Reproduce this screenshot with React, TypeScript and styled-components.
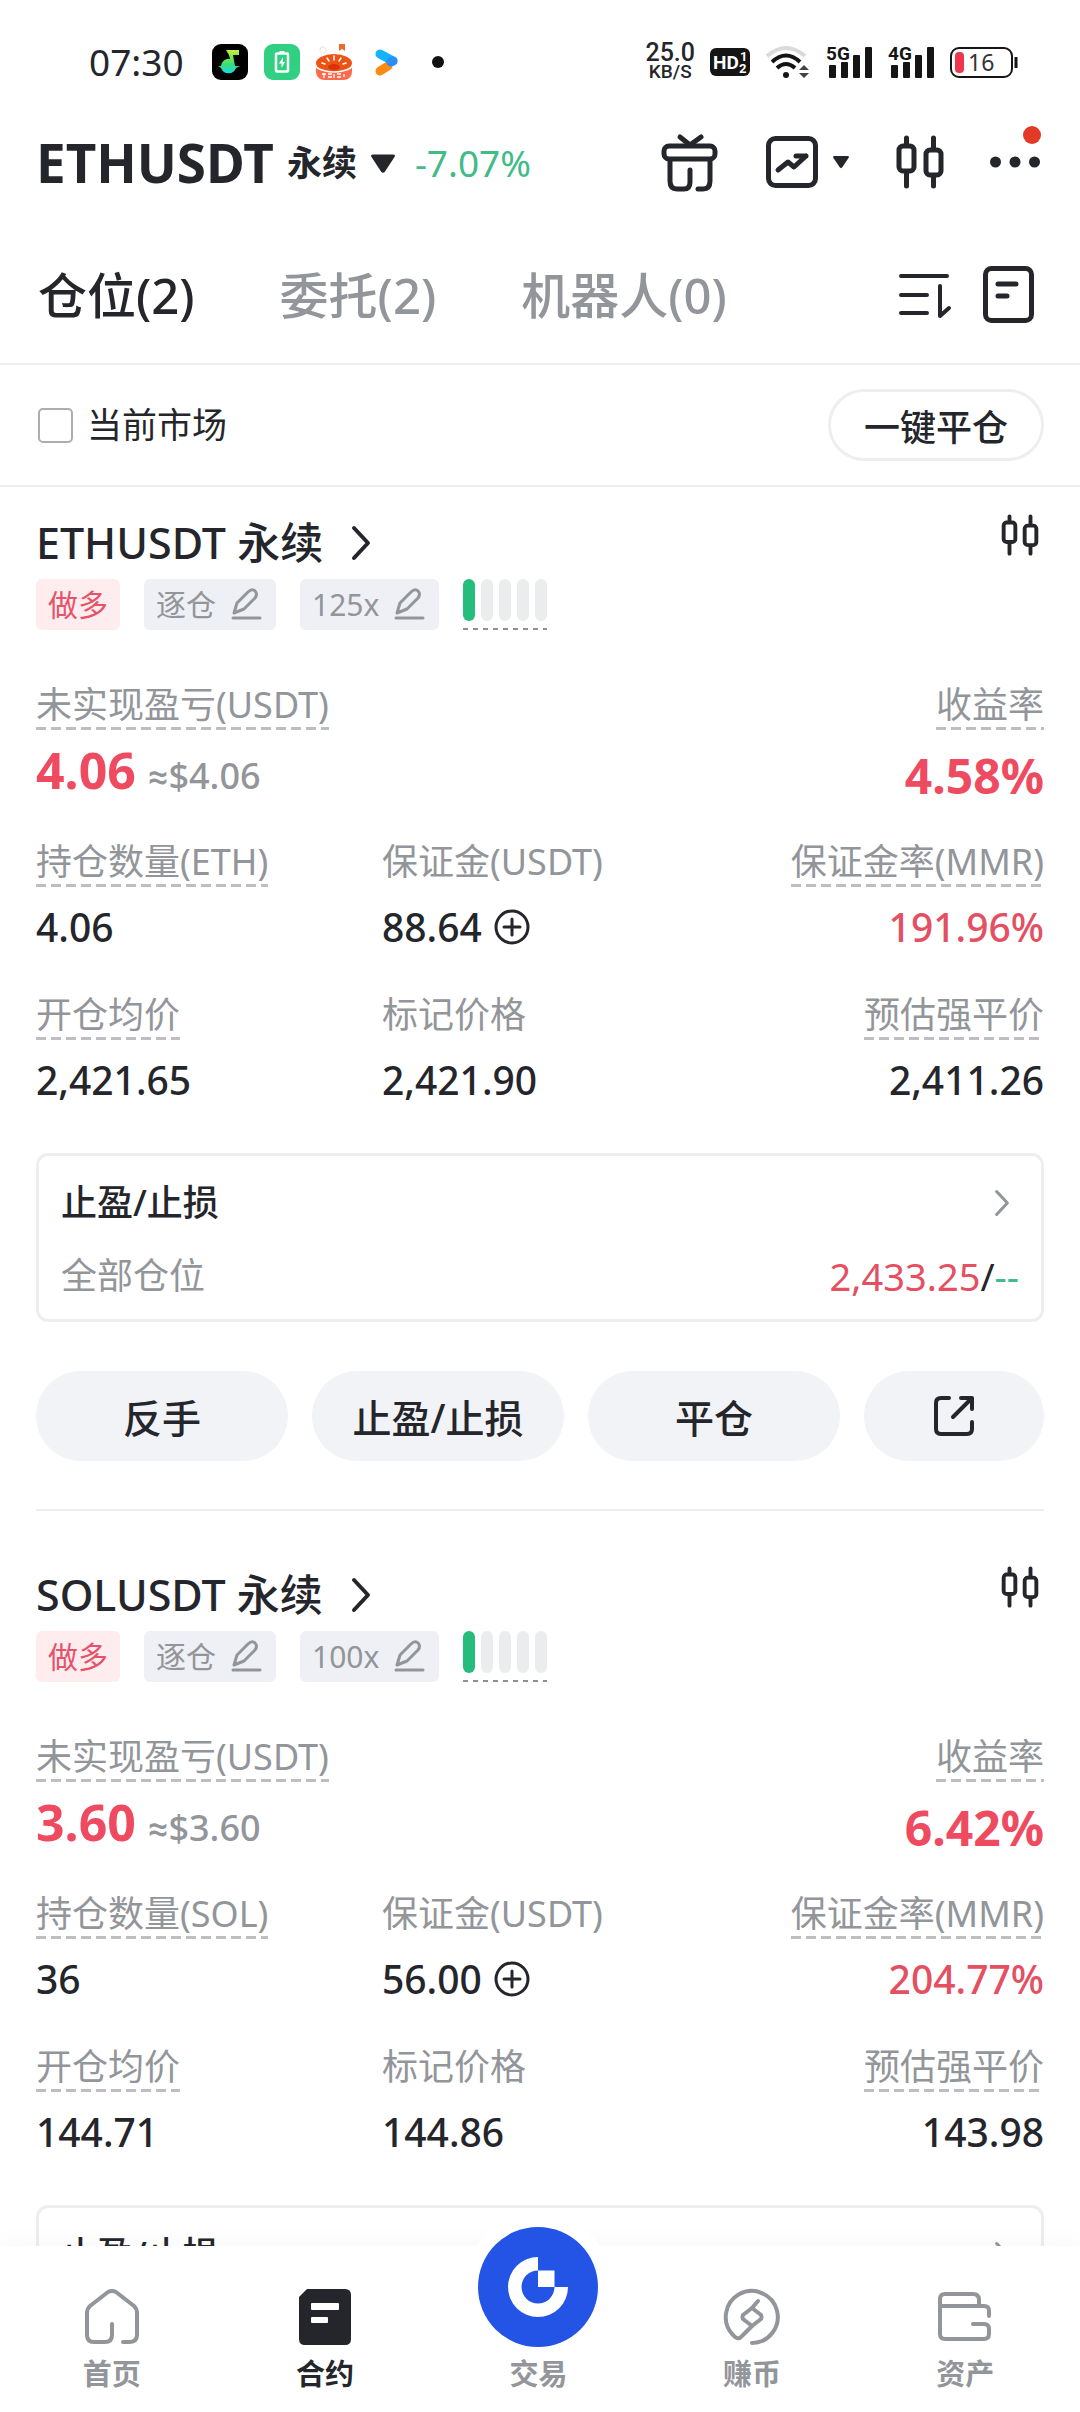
import React from "react";
import styled, { createGlobalStyle } from "styled-components";

const c = {
  ink: "#24262b",
  gray: "#929599",
  line: "#eeeeef",
  dash: "#bdbec2",
  red: "#ef4b60",
  softRed: "#e44f62",
  green: "#42bb88",
  blue: "#2354e6",
};

const GlobalStyle = createGlobalStyle`
  *, *::before, *::after { box-sizing: border-box; }
  body {
    margin: 0;
    background: #fff;
    color: ${c.ink};
    font-family: "Noto Sans", Roboto, "Noto Sans CJK SC", sans-serif;
    font-size: 36px;
  }
  button, input { font: inherit; color: inherit; margin: 0; }
  button { border: 0; padding: 0; background: none; cursor: pointer; }
  a { color: inherit; text-decoration: none; }
  svg { display: block; flex: none; overflow: visible; }
  h1, h2, dl, dt, dd { margin: 0; font: inherit; }
`;

const Screen = styled.div`
  height: 100vh;
  display: flex;
  flex-direction: column;
  background: #fff;
`;

/* ---------- status bar ---------- */

const StatusBar = styled.div`
  display: flex;
  justify-content: space-between;
  align-items: center;
  height: 98px;
  padding: 42px 62px 16px 89px;
`;

const StatusGroup = styled.div<{ $gap: number }>`
  display: flex;
  align-items: center;
  gap: ${(p) => p.$gap}px;
`;

const Clock = styled.span`
  font-size: 37px;
  line-height: 40px;
  margin-right: 12px;
`;

const Speed = styled.span`
  display: flex;
  flex-direction: column;
  align-items: center;
  font-family: Roboto, sans-serif;
  font-size: 25px;
  line-height: 20px;
  font-weight: 500;
`;

const SpeedUnit = styled.span`
  font-size: 19px;
  line-height: 18px;
`;

/* ---------- header ---------- */

const Header = styled.header`
  display: flex;
  justify-content: space-between;
  align-items: center;
  height: 128px;
  padding: 0 40px 0 36px;
`;

const PairButton = styled.button`
  display: flex;
  align-items: center;
  gap: 13px;
  padding-top: 2px;
  line-height: 72px;
`;

const PairName = styled.h1`
  font-size: 53px;
  font-weight: 700;
`;

const PairKind = styled.span`
  font-weight: 700;
  font-size: 35px;
`;

const PairChange = styled.span`
  margin-left: 6px;
  font-size: 37px;
  color: ${c.green};
`;

const HeaderTools = styled.div`
  display: flex;
  align-items: center;
  gap: 46px;
`;

const IconButton = styled.button`
  display: flex;
  align-items: center;
  gap: 14px;
  position: relative;
`;

const AlertDot = styled.i`
  position: absolute;
  right: -1px;
  top: -30px;
  width: 18px;
  height: 18px;
  border-radius: 50%;
  background: #e23a26;
`;

/* ---------- tabs and filter ---------- */

const TabBar = styled.div`
  display: flex;
  justify-content: space-between;
  align-items: center;
  height: 139px;
  padding: 0 46px 0 38px;
  border-bottom: 2px solid ${c.line};
`;

const Tabs = styled.nav`
  display: flex;
  gap: 85px;
`;

const Tab = styled.button<{ $active?: boolean }>`
  font-size: 49px;
  line-height: 64px;
  font-weight: 500;
  color: ${(p) => (p.$active ? c.ink : c.gray)};
`;

const TabTools = styled.div`
  display: flex;
  align-items: center;
  gap: 32px;
`;

const FilterBar = styled.div`
  display: flex;
  justify-content: space-between;
  align-items: center;
  height: 122px;
  padding: 0 36px 0 38px;
  border-bottom: 2px solid ${c.line};
`;

const CheckLabel = styled.label`
  display: flex;
  align-items: center;
  gap: 14px;
  font-size: 35px;
  line-height: 48px;
`;

const CheckBox = styled.input`
  appearance: none;
  width: 35px;
  height: 35px;
  border: 2px solid #adadad;
  border-radius: 5px;
  background: #fff;
  &:checked {
    background: ${c.ink};
  }
`;

const OutlinePill = styled.button`
  height: 72px;
  padding: 0 33px;
  border: 3px solid ${c.line};
  border-radius: 36px;
  font-weight: 500;
`;

/* ---------- position card ---------- */

const Main = styled.main`
  flex: 1;
  min-height: 0;
  overflow-y: auto;
  scrollbar-width: none;
`;

const Card = styled.article`
  margin: 0 36px 28px;
  padding: 27px 0 48px;
  border-bottom: 2px solid ${c.line};
`;

const CardHead = styled.div`
  display: flex;
  justify-content: space-between;
  align-items: flex-start;
  padding-right: 5px;
`;

const CardTitle = styled.a`
  display: flex;
  align-items: center;
  gap: 28px;
  font-size: 43px;
  line-height: 58px;
  font-weight: 500;
`;

const Badges = styled.div`
  display: flex;
  gap: 24px;
  margin: 7px 0 53px;
  height: 51px;
`;

const SideBadge = styled.span`
  padding: 0 12px;
  border-radius: 6px;
  background: #feecee;
  color: #e6526a;
  font-size: 30px;
  line-height: 52px;
`;

const EditBadge = styled.button`
  display: flex;
  align-items: center;
  gap: 12px;
  padding: 0 12px;
  border-radius: 6px;
  background: #eff0f5;
  color: ${c.gray};
  font-size: 30px;
  line-height: 52px;
`;

const Meter = styled.span`
  display: flex;
  gap: 6px;
  padding-bottom: 9px;
  background: repeating-linear-gradient(90deg, #8d9095 0 5px, transparent 5px 10px) left bottom / 100% 2px no-repeat;
`;

const MeterBar = styled.i<{ $on?: boolean }>`
  width: 12px;
  border-radius: 6px;
  background: ${(p) => (p.$on ? "#26bc7b" : "#ebecee")};
`;

const StatGrid = styled.dl`
  display: grid;
  grid-template-columns: repeat(3, 1fr);
  column-gap: 30px;
  row-gap: 42px;
`;

const ProfitGrid = styled.dl`
  display: flex;
  justify-content: space-between;
  margin-bottom: 34px;
`;

const Stat = styled.div<{ $end?: boolean }>`
  display: flex;
  flex-direction: column;
  align-items: ${(p) => (p.$end ? "flex-end" : "flex-start")};
  gap: 16px;
  white-space: nowrap;
`;

const StatLabel = styled.dt<{ $hint?: boolean }>`
  height: 47px;
  line-height: 44px;
  color: ${c.gray};
  background: ${(p) =>
    p.$hint
      ? `repeating-linear-gradient(90deg, ${c.dash} 0 10px, transparent 10px 15px) left bottom / 100% 3px no-repeat`
      : "none"};
`;

const StatValue = styled.dd<{ $red?: boolean }>`
  display: flex;
  align-items: center;
  gap: 12px;
  font-size: 39px;
  line-height: 48px;
  font-weight: 500;
  color: ${(p) => (p.$red ? c.softRed : c.ink)};
`;

const BigValue = styled.dd<{ $tall?: boolean }>`
  font-size: ${(p) => (p.$tall ? 48 : 50)}px;
  line-height: ${(p) => (p.$tall ? 60 : 48)}px;
  font-weight: 700;
  color: ${c.red};
`;

const Approx = styled.span`
  margin-left: 12px;
  font-size: 36px;
  font-weight: 500;
  color: ${c.gray};
`;

const StopBox = styled.a`
  display: flex;
  flex-direction: column;
  gap: 25px;
  margin: 49px 0 49px;
  padding: 23px 22px 19px;
  border: 3px solid ${c.line};
  border-radius: 12px;
`;

const StopRow = styled.div`
  display: flex;
  justify-content: space-between;
  align-items: center;
  line-height: 48px;
`;

const StopTitle = styled.span`
  font-weight: 500;
`;

const StopScope = styled.span`
  color: ${c.gray};
`;

const StopPrices = styled.span`
  font-size: 38px;
`;

const TakeProfit = styled.span`
  color: ${c.softRed};
`;

const StopLoss = styled.span`
  color: ${c.green};
`;

const Actions = styled.div`
  display: grid;
  grid-template-columns: 7fr 7fr 7fr 5fr;
  gap: 24px;
`;

const ActionButton = styled.button`
  display: flex;
  align-items: center;
  justify-content: center;
  height: 90px;
  border-radius: 45px;
  background: #f1f3f6;
  font-size: 39px;
  font-weight: 500;
`;

/* ---------- bottom navigation ---------- */

const BottomNav = styled.nav`
  position: relative;
  display: grid;
  grid-template-columns: repeat(5, 1fr);
  padding: 43px 8px 20px 5px;
  background: #fff;
  box-shadow: 0 -4px 24px rgba(30, 40, 60, 0.03);
`;

const NavItem = styled.a<{ $active?: boolean }>`
  display: flex;
  flex-direction: column;
  align-items: center;
  gap: 11px;
  font-size: 29px;
  line-height: 36px;
  font-weight: 700;
  color: ${(p) => (p.$active ? c.ink : c.gray)};
`;

const TradeDisc = styled.span`
  width: 120px;
  height: 120px;
  margin: -62px 0 -2px;
  border-radius: 50%;
  background: ${c.blue};
  box-shadow: 0 0 0 14px #fff;
`;

/* ---------- drawings ---------- */

const stroke = {
  fill: "none",
  stroke: "currentColor",
  strokeWidth: 4,
  strokeLinecap: "round" as const,
  strokeLinejoin: "round" as const,
};

const Triangle = ({ width, height }: { width: number; height: number }) => (
  <svg width={width} height={height} viewBox="0 0 26 21">
    <path d="M3 1.500H23Q26 1.500 24.500 4L15 18.500Q13 21 11 18.500L1.500 4Q0 1.500 3 1.500Z" fill="currentColor" />
  </svg>
);

const Candles = ({ width, height }: { width: number; height: number }) => (
  <svg width={width} height={height} viewBox="0 0 48 54" {...stroke} strokeWidth="5">
    <rect x="3" y="11" width="15" height="25" rx="4" />
    <path d="M10.500 3V10M10.500 37V51M37.500 3V13M37.500 41V51" />
    <rect x="30" y="15" width="15" height="25" rx="4" />
  </svg>
);

const Gift = () => (
  <svg width="60" height="60" viewBox="0 0 60 60" {...stroke} strokeWidth="5">
    <rect x="4" y="14" width="51" height="13" rx="5" />
    <path d="M20 5L30 13L41 5" />
    <path d="M10 28V49Q10 57 17 57H24Q30 57 30 50V38M50 28V49Q50 57 43 57H38" />
  </svg>
);

const ChartBox = () => (
  <svg width="52" height="52" viewBox="0 0 52 52" {...stroke} strokeWidth="5">
    <rect x="2.500" y="2.500" width="47" height="47" rx="7" />
    <path d="M12 34L22 26L28 31L40 20M30 20H40" />
  </svg>
);

const Dots = () => (
  <svg width="50" height="12" viewBox="0 0 50 12" fill="currentColor">
    <circle cx="5.500" cy="6" r="5.500" />
    <circle cx="25" cy="6" r="5.500" />
    <circle cx="44.500" cy="6" r="5.500" />
  </svg>
);

const SortIcon = () => (
  <svg width="52" height="46" viewBox="0 0 52 46" {...stroke}>
    <path d="M2 4H48M2 23H28M2 41H28M41 14V44L50 36" />
  </svg>
);

const DocIcon = () => (
  <svg width="51" height="57" viewBox="0 0 51 57" {...stroke} strokeWidth="5">
    <rect x="2.500" y="2.500" width="46" height="52" rx="6" />
    <path d="M15 18H33M15 30H24" />
  </svg>
);

const Chevron = ({ width, height, weight }: { width: number; height: number; weight: number }) => (
  <svg width={width} height={height} viewBox="0 0 20 34" {...stroke} strokeWidth={weight}>
    <path d="M3 2L17 17L3 32" />
  </svg>
);

const Pencil = () => (
  <svg width="36" height="36" viewBox="0 0 36 36" {...stroke} strokeWidth="3">
    <path d="M6 26L9 16L20 5Q24 1 27 4Q30 7 27 11L16 22Z" />
    <path d="M5 31H32" />
  </svg>
);

const PlusCircle = () => (
  <svg width="36" height="36" viewBox="0 0 36 36" {...stroke} strokeWidth="3">
    <circle cx="18" cy="18" r="16" />
    <path d="M10 18H26M18 10V26" />
  </svg>
);

const ShareIcon = () => (
  <svg width="42" height="42" viewBox="0 0 42 42" {...stroke}>
    <path d="M16 3H8Q3 3 3 8V34Q3 39 8 39H34Q39 39 39 34V27" />
    <path d="M20 22L39 3M28 3H39V14" />
  </svg>
);

const HomeIcon = () => (
  <svg width="54" height="56" viewBox="0 0 54 56" {...stroke}>
    <path d="M38 53H44Q52 53 52 46V23Q52 20 49 17L31 3Q27 1 23 3L5 17Q2 20 2 23V46Q2 53 9 53H20Q27 53 27 46V35" />
  </svg>
);

const ContractIcon = () => (
  <svg width="52" height="56" viewBox="0 0 52 56">
    <path d="M8 0H46Q52 0 52 6V50Q52 56 46 56H6Q0 56 0 50V8Z" fill="currentColor" />
    <rect x="12" y="14" width="28" height="7" rx="1" fill="#fff" />
    <rect x="12" y="28" width="17" height="6" rx="1" fill="#fff" />
  </svg>
);

const TradeLogo = () => (
  <svg width="120" height="120" viewBox="0 0 120 120" fill="#fff">
    <path d="M60 30A30 30 0 1 0 90 60H76.500A16.500 16.500 0 1 1 60 43.500Z" />
    <rect x="60" y="43.500" width="16.500" height="16.500" />
  </svg>
);

const EarnIcon = () => (
  <svg width="56" height="56" viewBox="0 0 56 56" {...stroke}>
    <path d="M28 54A26 26 0 1 0 9 46Q14 52 18 47L28 37L19 30Q18 28 19 26L28 19L34 12" />
    <path d="M28 19L37 26Q38 28 37 30L28 37" />
  </svg>
);

const WalletIcon = () => (
  <svg width="54" height="56" viewBox="0 0 54 56" {...stroke}>
    <path d="M2 17V10Q2 5 7 5H35Q41 5 41 11V17" />
    <path d="M2 17H46Q51 17 51 22V27" />
    <path d="M2 17V45Q2 50 7 50H46Q51 50 51 45V40Q51 35 46 35H35" />
  </svg>
);

const MusicApp = () => (
  <svg width="36" height="36" viewBox="0 0 36 36">
    <defs>
      <linearGradient id="note" x1="0" y1="0" x2="0" y2="1">
        <stop offset="0" stopColor="#c4ef3a" />
        <stop offset="0.6" stopColor="#3be070" />
        <stop offset="1" stopColor="#19d8e8" />
      </linearGradient>
    </defs>
    <rect width="36" height="36" rx="9" fill="#000" />
    <path d="M14 6H27V11H21L23 22H28L24 24A8 8 0 0 1 9 24L6 22H9A7.500 7.500 0 0 1 18 15L17 11Z" fill="url(#note)" />
  </svg>
);

const BatteryApp = () => (
  <svg width="36" height="36" viewBox="0 0 36 36">
    <rect width="36" height="36" rx="9" fill="#2fd082" />
    <rect x="12" y="9.500" width="12" height="18" rx="1" fill="none" stroke="#fff" strokeWidth="2.500" />
    <rect x="15.500" y="7" width="5" height="3" fill="#fff" />
    <path d="M19 13L15 19.500H17.500V24L21 18H19Z" fill="#fff" />
  </svg>
);

const FruitApp = () => (
  <svg width="36" height="36" viewBox="0 0 36 36">
    <path d="M23 0H29V7L26 5L23 7Z" fill="#ee6a2c" />
    <circle cx="7" cy="6" r="3" fill="none" stroke="#f6b79c" strokeDasharray="1 1" />
    <path d="M0 24H36Q37 36 27 36H9Q-1 36 0 24Z" fill="#ff6a4d" />
    <ellipse cx="18" cy="19" rx="18" ry="9" fill="#ee5316" />
    <path d="M1 24Q18 32 35 24" fill="none" stroke="#fff" strokeWidth="1.500" />
    <path d="M18 12V16M11 14L13 17M25 14L23 17M6 19L9 20M30 19L27 20" stroke="#fff" strokeWidth="1.500" strokeLinecap="round" />
    <ellipse cx="18" cy="23" rx="6" ry="3" fill="#d8330a" />
    <path d="M6 30H10M8 29V34M12 30H16M12 33H16M18 30V34M21 30H25M21 33H25M28 30V33" stroke="#fff" strokeWidth="1.300" />
  </svg>
);

const PlayApp = () => (
  <svg width="36" height="36" viewBox="0 0 36 36" fill="none" strokeWidth="9" strokeLinecap="round">
    <path d="M12 27L20 22" stroke="#ff8a12" />
    <path d="M12 10L25 17" stroke="#12b4ff" />
    <path d="M23 18L25 17" stroke="#2c8dfa" />
  </svg>
);

const NoticeDot = () => (
  <svg width="36" height="36" viewBox="0 0 36 36">
    <circle cx="18" cy="18" r="6" fill="#111" />
  </svg>
);

const HdBadge = () => (
  <svg width="40" height="30" viewBox="0 0 40 30" fontFamily="Roboto, sans-serif" fontWeight="700" fill="#fff">
    <rect y="1" width="40" height="28" rx="6" fill="#151515" />
    <text x="3" y="22" fontSize="19">HD</text>
    <text x="30" y="14" fontSize="13">1</text>
    <text x="29" y="26" fontSize="13">2</text>
  </svg>
);

const Wifi = () => (
  <svg width="46" height="34" viewBox="0 0 46 34" fill="none" strokeWidth="4">
    <path d="M2 11Q21 -5 40 11" stroke="#dadada" />
    <path d="M7 17Q21 4 35 17" stroke="#151515" />
    <path d="M12 23Q21 15 30 23" stroke="#151515" />
    <circle cx="21" cy="30" r="3" fill="#151515" />
    <path d="M34 25L39 20L44 25ZM34 28L39 33L44 28Z" fill="#444" />
  </svg>
);

const Signal = ({ label }: { label: string }) => (
  <svg width="47" height="34" viewBox="0 0 47 34" fill="#151515">
    <text x="0" y="15" fontFamily="Roboto, sans-serif" fontWeight="700" fontSize="19">{label}</text>
    <rect x="3" y="20" width="7" height="13" rx="1" />
    <rect x="15" y="17" width="7" height="16" rx="1" />
    <rect x="27" y="10" width="7" height="23" rx="1" />
    <rect x="39" y="2" width="7" height="31" rx="1" />
  </svg>
);

const Battery = () => (
  <svg width="68" height="34" viewBox="0 0 68 34">
    <rect x="1" y="3" width="61" height="29" rx="8" fill="none" stroke="#151515" strokeWidth="2" />
    <path d="M66 12V23" stroke="#151515" strokeWidth="3" />
    <rect x="5" y="7" width="9" height="21" rx="4" fill="#f0364f" />
    <text x="18" y="26" fontFamily="Noto Sans, sans-serif" fontSize="23" fill="#333">16</text>
  </svg>
);

/* ---------- content ---------- */

type Position = {
  symbol: string;
  coin: string;
  leverage: string;
  profit: string;
  rate: string;
  size: string;
  margin: string;
  marginRate: string;
  entry: string;
  mark: string;
  liquidation: string;
  takeProfit: string;
};

const positions: Position[] = [
  {
    symbol: "ETHUSDT", coin: "ETH", leverage: "125x", profit: "4.06", rate: "4.58%",
    size: "4.06", margin: "88.64", marginRate: "191.96%",
    entry: "2,421.65", mark: "2,421.90", liquidation: "2,411.26", takeProfit: "2,433.25",
  },
  {
    symbol: "SOLUSDT", coin: "SOL", leverage: "100x", profit: "3.60", rate: "6.42%",
    size: "36", margin: "56.00", marginRate: "204.77%",
    entry: "144.71", mark: "144.86", liquidation: "143.98", takeProfit: "--",
  },
];

const PositionCard = ({ p }: { p: Position }) => (
  <Card>
    <CardHead>
      <h2>
        <CardTitle href="#pair">
          {p.symbol} 永续
          <Chevron width={20} height={34} weight={4} />
        </CardTitle>
      </h2>
      <IconButton aria-label="K线">
        <Candles width={38} height={42} />
      </IconButton>
    </CardHead>
    <Badges>
      <SideBadge>做多</SideBadge>
      <EditBadge>逐仓<Pencil /></EditBadge>
      <EditBadge>{p.leverage}<Pencil /></EditBadge>
      <Meter>
        <MeterBar $on />
        <MeterBar />
        <MeterBar />
        <MeterBar />
        <MeterBar />
      </Meter>
    </Badges>
    <ProfitGrid>
      <Stat>
        <StatLabel $hint>未实现盈亏(USDT)</StatLabel>
        <BigValue>{p.profit}<Approx>≈${p.profit}</Approx></BigValue>
      </Stat>
      <Stat $end>
        <StatLabel $hint>收益率</StatLabel>
        <BigValue $tall>{p.rate}</BigValue>
      </Stat>
    </ProfitGrid>
    <StatGrid>
      <Stat>
        <StatLabel $hint>持仓数量({p.coin})</StatLabel>
        <StatValue>{p.size}</StatValue>
      </Stat>
      <Stat>
        <StatLabel>保证金(USDT)</StatLabel>
        <StatValue>
          {p.margin}
          <IconButton aria-label="追加保证金"><PlusCircle /></IconButton>
        </StatValue>
      </Stat>
      <Stat $end>
        <StatLabel $hint>保证金率(MMR)</StatLabel>
        <StatValue $red>{p.marginRate}</StatValue>
      </Stat>
      <Stat>
        <StatLabel $hint>开仓均价</StatLabel>
        <StatValue>{p.entry}</StatValue>
      </Stat>
      <Stat>
        <StatLabel>标记价格</StatLabel>
        <StatValue>{p.mark}</StatValue>
      </Stat>
      <Stat $end>
        <StatLabel $hint>预估强平价</StatLabel>
        <StatValue>{p.liquidation}</StatValue>
      </Stat>
    </StatGrid>
    <StopBox href="#stop">
      <StopRow>
        <StopTitle>止盈/止损</StopTitle>
        <StopScope><Chevron width={34} height={26} weight={4} /></StopScope>
      </StopRow>
      <StopRow>
        <StopScope>全部仓位</StopScope>
        <StopPrices>
          <TakeProfit>{p.takeProfit}</TakeProfit>/<StopLoss>--</StopLoss>
        </StopPrices>
      </StopRow>
    </StopBox>
    <Actions>
      <ActionButton>反手</ActionButton>
      <ActionButton>止盈/止损</ActionButton>
      <ActionButton>平仓</ActionButton>
      <ActionButton aria-label="分享"><ShareIcon /></ActionButton>
    </Actions>
  </Card>
);

export default function App() {
  return (
    <Screen>
      <GlobalStyle />
      <StatusBar>
        <StatusGroup $gap={16}>
          <Clock>07:30</Clock>
          <MusicApp />
          <BatteryApp />
          <FruitApp />
          <PlayApp />
          <NoticeDot />
        </StatusGroup>
        <StatusGroup $gap={15}>
          <Speed>25.0<SpeedUnit>KB/S</SpeedUnit></Speed>
          <HdBadge />
          <Wifi />
          <Signal label="5G" />
          <Signal label="4G" />
          <Battery />
        </StatusGroup>
      </StatusBar>
      <Header>
        <PairButton>
          <PairName>ETHUSDT</PairName>
          <PairKind>永续</PairKind>
          <Triangle width={26} height={21} />
          <PairChange>-7.07%</PairChange>
        </PairButton>
        <HeaderTools>
          <IconButton aria-label="福利"><Gift /></IconButton>
          <IconButton aria-label="图表">
            <ChartBox />
            <Triangle width={18} height={14} />
          </IconButton>
          <IconButton aria-label="K线"><Candles width={48} height={54} /></IconButton>
          <IconButton aria-label="更多">
            <Dots />
            <AlertDot />
          </IconButton>
        </HeaderTools>
      </Header>
      <TabBar>
        <Tabs>
          <Tab $active>仓位(2)</Tab>
          <Tab>委托(2)</Tab>
          <Tab>机器人(0)</Tab>
        </Tabs>
        <TabTools>
          <IconButton aria-label="排序"><SortIcon /></IconButton>
          <IconButton aria-label="订单记录"><DocIcon /></IconButton>
        </TabTools>
      </TabBar>
      <FilterBar>
        <CheckLabel>
          <CheckBox type="checkbox" />
          当前市场
        </CheckLabel>
        <OutlinePill>一键平仓</OutlinePill>
      </FilterBar>
      <Main>
        {positions.map((p) => (
          <PositionCard key={p.symbol} p={p} />
        ))}
      </Main>
      <BottomNav>
        <NavItem href="#home"><HomeIcon />首页</NavItem>
        <NavItem href="#futures" $active><ContractIcon />合约</NavItem>
        <NavItem href="#trade"><TradeDisc><TradeLogo /></TradeDisc>交易</NavItem>
        <NavItem href="#earn"><EarnIcon />赚币</NavItem>
        <NavItem href="#assets"><WalletIcon />资产</NavItem>
      </BottomNav>
    </Screen>
  );
}
